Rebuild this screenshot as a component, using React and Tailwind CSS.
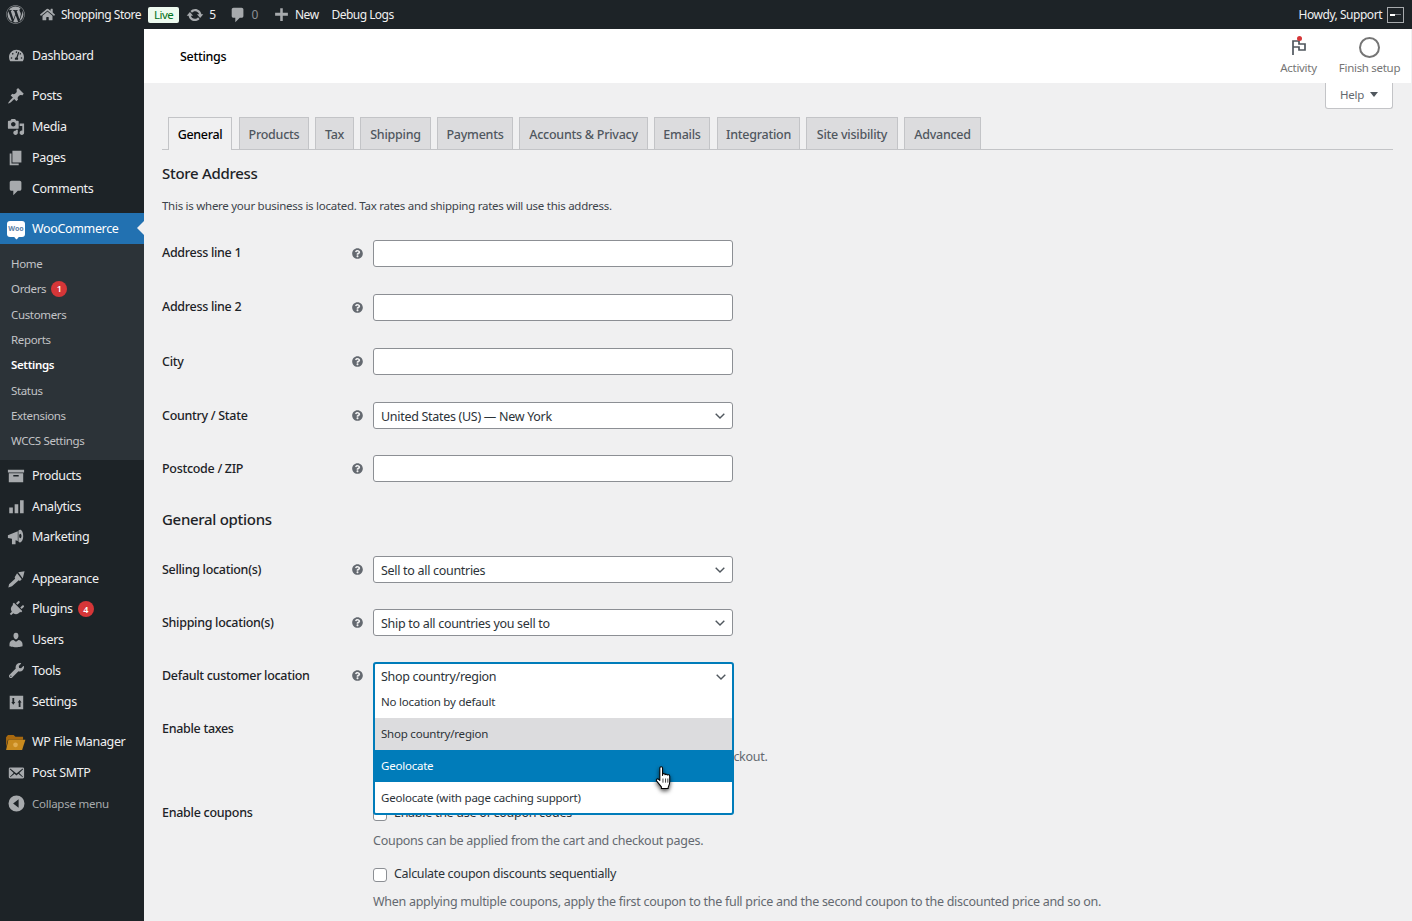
import React from 'react'
import { FaWordpress, FaHome, FaTachometerAlt, FaPlug, FaWrench, FaQuestionCircle } from 'react-icons/fa'

const FONT = "font-['Noto_Sans','Open_Sans',sans-serif]"

const Dash = ({ d, className, rule }) => (
  <svg viewBox="0 0 20 20" className={className} fill="currentColor">
    <path d={d} fillRule={rule} />
  </svg>
)

// dashicon style glyphs
const PATHS = {
  post: 'M10.44 3.02l1.82-1.82 6.36 6.35-1.83 1.82c-1.05-.68-2.48-.57-3.41.36l-.75.75c-.92.93-1.04 2.35-.35 3.41l-1.83 1.82-2.41-2.41-2.8 2.79c-.42.42-3.38 2.71-3.8 2.29s1.86-3.39 2.28-3.81l2.79-2.79L4.1 9.36l1.83-1.82c1.05.69 2.48.57 3.4-.36l.75-.75c.93-.92 1.05-2.35.36-3.41z',
  media: 'M13 11V4c0-.55-.45-1-1-1h-1.67L9 1H5L3.67 3H2c-.55 0-1 .45-1 1v7c0 .55.45 1 1 1h10c.55 0 1-.45 1-1zM7 4.5c1.38 0 2.5 1.12 2.5 2.5S8.38 9.5 7 9.5 4.5 8.38 4.5 7 5.62 4.5 7 4.5zM14 6h5v10.5c0 1.38-1.12 2.5-2.5 2.5S14 17.88 14 16.5s1.12-2.5 2.5-2.5c.17 0 .34.02.5.05V9h-3V6zm-4 8.05V13h2v3.5c0 1.38-1.12 2.5-2.5 2.5S7 17.88 7 16.5 8.12 14 9.5 14c.17 0 .34.02.5.05z',
  page: 'M6 15V2h10v13H6zm-1 1h8v2H3V5h2v11z',
  comment: 'M5 2h9c1.1 0 2 .9 2 2v7c0 1.1-.9 2-2 2h-2l-5 5v-5H5c-1.1 0-2-.9-2-2V4c0-1.1.9-2 2-2z',
  products: 'M1 3h18v3H1zM2 7h16v10H2zm5 2v1.500h6V9z',
  analytics: 'M2.500 10.500h4V17h-4zM8.500 7h4v10h-4zM14.500 2.500h4V17h-4z',
  marketing: 'M1 8l11-4.500v11L9.500 13.500V18H5.500v-6L1 11zM14.500 2c2 0 3.500 3 3.500 7s-1.500 7-3.500 7c-.7 0-1.300-.4-1.800-1V3c.5-.6 1.100-1 1.800-1zm.3 4.500c-.8 0-1.300 1.100-1.300 2.500s.5 2.500 1.300 2.500 1.300-1.100 1.300-2.500-.5-2.500-1.300-2.500z',
  brush: 'M12.500 2.500l7-1-2 8zM11.200 3.500l5.200 6.700-2 2-1.400-.7L5.500 18l-4 1.500.8-3.700 6.700-6-.5-1.700z',
  users: 'M10 9.25c-2.27 0-2.73-3.44-2.73-3.44C7 4.02 7.82 2 9.97 2c2.16 0 2.98 2.02 2.71 3.81 0 0-.46 3.44-2.68 3.44zm0 2.57L12.72 10c2.39 0 4.52 2.33 4.52 4.53v2.49s-3.65 1.13-7.24 1.13c-3.65 0-7.24-1.13-7.24-1.13v-2.49c0-2.25 1.94-4.48 4.47-4.48z',
  settings: 'M3 3h15v15H3zM6 5.500v4.500H4.800L7 13l2.200-3H8V5.500zm7 10h2v-5h1.200L14 7.500 11.800 10.500H13z',
  email: 'M19 14.5v-9c0-.83-.67-1.500-1.500-1.500H3.490c-.83 0-1.500.67-1.500 1.500v9c0 .83.67 1.500 1.500 1.500H17.500c.83 0 1.500-.67 1.500-1.500zm-1.310-9.110c.33.33.15.67-.03.84L13.600 9.950l3.900 4.060c.12.14.2.36.06.51-.13.16-.43.15-.56.05l-4.370-3.730-2.140 1.950-2.130-1.950-4.370 3.730c-.13.1-.43.11-.56-.05-.14-.15-.06-.37.06-.51l3.900-4.060-4.060-3.720c-.18-.17-.36-.51-.03-.84s.67-.17.95.07l6.240 5.040 6.250-5.040c.28-.24.62-.4.95-.07z',
  collapse: 'M10 .6a9.400 9.400 0 1 1 0 18.800A9.400 9.400 0 0 1 10 .6zm2.500 4.400L6 10l6.500 5z',
  sync: 'M10.200 3.280c3.530 0 6.430 2.610 6.920 6h2.080l-3.500 4-3.500-4h2.320c-.45-1.970-2.210-3.440-4.320-3.440-1.450 0-2.730.71-3.540 1.780L4.950 5.660C6.230 4.200 8.110 3.280 10.200 3.280zm-.4 13.440c-3.520 0-6.430-2.610-6.920-6H.8l3.500-4c1.170 1.330 2.330 2.670 3.500 4H5.480c.45 1.970 2.210 3.440 4.320 3.440 1.450 0 2.730-.71 3.540-1.780l1.710 1.950c-1.280 1.460-3.150 2.390-5.250 2.390z',
  plus: 'M17.500 8v3.500h-6V17.500H8.500v-6h-6V8h6V2.500h3V8z',
}

const Icon = (name) => ({ className }) => <Dash d={PATHS[name]} rule="evenodd" className={className} />

const FolderIcon = ({ className }) => (
  <svg viewBox="0 0 22 18" className={className}>
    <path d="M1 3.500L3 1h6l2 2h8v3H3L1 14z" fill="#a8690f" />
    <path d="M3.500 6H21.500L18 17H1z" fill="#c88a1e" />
    <circle cx="11" cy="11.500" r="2.500" fill="#e0ac50" />
  </svg>
)

const WooIcon = () => (
  <div className="relative flex h-[16px] w-[18px] items-center justify-center rounded-[3px] bg-white">
    <span className={`${FONT} text-[7px] font-bold leading-none text-[#5b7fa6]`}>Woo</span>
    <div className="absolute bottom-[-2px] left-[8px] h-[3px] w-[3px] rotate-45 bg-white" />
  </div>
)

const topMenu = [
  { label: 'Dashboard', Icon: FaTachometerAlt, size: 'h-[15px] w-[15px]' },
  { spacer: 'h-[10px]' },
  { label: 'Posts', Icon: Icon('post'), size: 'h-[18px] w-[18px]' },
  { label: 'Media', Icon: Icon('media'), size: 'h-[18px] w-[18px]' },
  { label: 'Pages', Icon: Icon('page'), size: 'h-[18px] w-[18px]' },
  { label: 'Comments', Icon: Icon('comment'), size: 'h-[18px] w-[18px]' },
]

const subMenu = [
  { label: 'Home' },
  { label: 'Orders', badge: '1' },
  { label: 'Customers' },
  { label: 'Reports' },
  { label: 'Settings', current: true },
  { label: 'Status' },
  { label: 'Extensions' },
  { label: 'WCCS Settings' },
]

const bottomMenu = [
  { label: 'Products', Icon: Icon('products'), size: 'h-[18px] w-[18px]' },
  { label: 'Analytics', Icon: Icon('analytics'), size: 'h-[18px] w-[18px]' },
  { label: 'Marketing', Icon: Icon('marketing'), size: 'h-[18px] w-[18px]' },
  { spacer: 'h-[10.5px]' },
  { label: 'Appearance', Icon: Icon('brush'), size: 'h-[18px] w-[18px]' },
  { label: 'Plugins', Icon: FaPlug, size: 'h-[16px] w-[16px] rotate-45', badge: '4' },
  { label: 'Users', Icon: Icon('users'), size: 'h-[18px] w-[18px]' },
  { label: 'Tools', Icon: FaWrench, size: 'h-[15px] w-[15px]' },
  { label: 'Settings', Icon: Icon('settings'), size: 'h-[18px] w-[18px]' },
  { spacer: 'h-[10px]' },
  { label: 'WP File Manager', Icon: FolderIcon, size: 'h-[17px] w-[21px] ml-[-1px]' },
  { label: 'Post SMTP', Icon: Icon('email'), size: 'h-[18px] w-[18px]' },
]

const tabs = [
  { label: 'Products', w: 'w-[70px] ml-px' },
  { label: 'Tax', w: 'w-[39px]' },
  { label: 'Shipping', w: 'w-[71px]' },
  { label: 'Payments', w: 'w-[76px]' },
  { label: 'Accounts & Privacy', w: 'w-[129px]' },
  { label: 'Emails', w: 'w-[56px]' },
  { label: 'Integration', w: 'w-[83px] ml-px' },
  { label: 'Site visibility', w: 'w-[92px]' },
  { label: 'Advanced', w: 'w-[77px]' },
]

function Badge({ children }) {
  return (
    <span className="ml-[5px] flex h-[16px] w-[16px] items-center justify-center rounded-full bg-[#d63638] text-[9px] font-semibold leading-none tracking-normal text-white">
      {children}
    </span>
  )
}

function MenuList({ items }) {
  return items.map((item, i) =>
    item.spacer ? (
      <div key={i} className={item.spacer} />
    ) : (
      <div key={i} className="flex h-[30.75px] items-center text-[12.5px] text-[#f0f0f1]">
        <div className="flex w-[32px] shrink-0 items-center justify-center text-[#a7aaad]">
          <item.Icon className={item.size} />
        </div>
        <span className="pt-px tracking-[-0.35px]">{item.label}</span>
        {item.badge && <Badge>{item.badge}</Badge>}
      </div>
    ),
  )
}

function Sidebar() {
  return (
    <aside className="w-[144px] shrink-0 bg-[#1d2327] pt-[11px]">
      <MenuList items={topMenu} />
      <div className="relative mt-[9.25px] flex h-[31px] items-center bg-[#2271b1] text-[12.5px] text-white">
        <div className="flex w-[32px] shrink-0 items-center justify-center">
          <WooIcon />
        </div>
        <span className="pt-px tracking-[-0.35px]">WooCommerce</span>
        <div className="absolute right-0 top-[8px] h-0 w-0 border-y-[7.500px] border-r-[7px] border-y-transparent border-r-[#f0f0f1]" />
      </div>
      <div className="bg-[#2c3338] py-[7px]">
        {subMenu.map((item) => (
          <div
            key={item.label}
            className={`flex h-[25.300px] items-center pl-[11px] text-[11.5px] tracking-[-0.35px] ${
              item.current ? 'font-semibold text-white' : 'text-[#c3c4c7]'
            }`}
          >
            {item.label}
            {item.badge && <Badge>{item.badge}</Badge>}
          </div>
        ))}
      </div>
      <MenuList items={bottomMenu} />
      <div className="flex h-[30.75px] items-center text-[11.5px] text-[#a7aaad]">
        <div className="flex w-[32px] shrink-0 items-center justify-center">
          <Dash d={PATHS.collapse} rule="evenodd" className="h-[17px] w-[17px]" />
        </div>
        <span className="tracking-[-0.25px]">Collapse menu</span>
      </div>
    </aside>
  )
}

function TopBar() {
  return (
    <header className="flex h-[29px] shrink-0 items-center bg-[#1d2327] text-[12px] tracking-[-0.47px] text-[#f0f0f1]">
      <FaWordpress className="ml-[6px] h-[19px] w-[19px] text-[#a7aaad]" />
      <FaHome className="ml-[15px] h-[15px] w-[15px] text-[#a7aaad]" />
      <span className="ml-[6px]">Shopping Store</span>
      <span className="ml-[7px] flex h-[16px] w-[31px] items-center justify-center rounded-[2px] bg-[#edfaef] text-[11.5px] text-[#007017]">
        Live
      </span>
      <Dash d={PATHS.sync} className="ml-[7px] h-[18px] w-[18px] text-[#a7aaad]" />
      <span className="ml-[5px]">5</span>
      <Dash d={PATHS.comment} className="ml-[13px] h-[18px] w-[18px] text-[#a7aaad]" />
      <span className="ml-[5px] text-[#8c8f94]">0</span>
      <Dash d={PATHS.plus} className="ml-[15px] h-[17px] w-[17px] text-[#a7aaad]" />
      <span className="ml-[5px]">New</span>
      <span className="ml-[13px] tracking-[-0.55px]">Debug Logs</span>
      <span className="ml-auto">Howdy, Support</span>
      <div className="ml-[5px] mr-[8px] flex h-[16px] w-[17px] items-center justify-center border border-[#a7aaad] bg-[#1d2327]">
        <div className="h-[2px] w-[5px] bg-white" />
        <div className="h-px w-[6px] bg-[#787c82]" />
      </div>
    </header>
  )
}

function PageHeader() {
  return (
    <div className="mr-px flex h-[54px] shrink-0 items-center bg-white pl-[36px] pr-[11px] text-[#757575]">
      <span className="translate-y-px text-[12.5px] font-medium tracking-[-0.3px] text-black">Settings</span>
      <div className="ml-auto flex w-[37px] flex-col items-center">
        <div className="relative flex h-[24px] items-center">
          <svg viewBox="0 0 16 18" className="h-[18px] w-[16px]" fill="none" stroke="#50575e" strokeWidth="1.700">
            <path d="M2 17V3h6v3h6v6H8V9H2" />
          </svg>
          <div className="absolute left-[6px] top-[1px] h-[5px] w-[5px] rounded-full bg-[#d63638]" />
        </div>
        <span className="whitespace-nowrap text-[11.5px] tracking-[-0.3px]">Activity</span>
      </div>
      <div className="ml-[22px] flex w-[61px] flex-col items-center">
        <div className="flex h-[24px] items-center">
          <div className="h-[21px] w-[21px] rounded-full border-2 border-[#757575]" />
        </div>
        <span className="whitespace-nowrap text-[11.5px] tracking-[-0.3px]">Finish setup</span>
      </div>
    </div>
  )
}

function Chevron({ className }) {
  return (
    <svg viewBox="0 0 10 6" className={className} fill="none" stroke="#50575e" strokeWidth="1.400">
      <path d="M.7.700 5 5l4.300-4.300" />
    </svg>
  )
}

function FieldRow({ label, mt, shift = 'translate-y-px', children }) {
  return (
    <div className={`grid h-[27px] grid-cols-[189px_22px_360px] items-center ${mt}`}>
      <span className={`text-[12.5px] font-medium tracking-[-0.3px] text-[#1d2327] ${shift}`}>{label}</span>
      <FaQuestionCircle className="ml-px h-[11px] w-[11px] text-[#646970]" />
      {children}
    </div>
  )
}

function TextInput() {
  return <div className="h-[27px] rounded-[3px] border border-[#8c8f94] bg-white" />
}

function Select({ value }) {
  return (
    <div className="flex h-[27px] items-center justify-between rounded-[3px] border border-[#8c8f94] bg-white pl-[7px] pr-[7px] text-[12.5px] tracking-[-0.3px] text-[#2c3338]">
      <span className="translate-y-[2px]">{value}</span>
      <Chevron className="h-[6px] w-[10px]" />
    </div>
  )
}

function LocationDropdown() {
  return (
    <div className="absolute left-0 top-0 z-10 h-[153px] w-[361px] overflow-hidden rounded-[3px] border-2 border-[#007cba] bg-white text-[#2c3338]">
      <div className="flex h-[26.500px] items-center justify-between pl-[6px] pr-[6px] pt-px text-[12.5px] tracking-[-0.3px]">
        Shop country/region
        <Chevron className="h-[6px] w-[10px] -translate-y-px" />
      </div>
      <div className="h-[27.500px] pl-[6px] text-[11.5px] leading-[22px] tracking-[-0.2px]">No location by default</div>
      <div className="flex h-[32px] items-center bg-[#dcdcde] pl-[6px] text-[11.5px] tracking-[-0.22px]">
        Shop country/region
      </div>
      <div className="flex h-[32px] items-center bg-[#007cba] pl-[6px] text-[11.5px] tracking-[-0.22px] text-white">
        Geolocate
      </div>
      <div className="flex h-[32px] items-center pl-[6px] text-[11.5px] tracking-[-0.22px]">
        Geolocate (with page caching support)
      </div>
    </div>
  )
}

function HandCursor() {
  return (
    <svg
      viewBox="0 0 17 24"
      className="absolute left-[282px] top-[104px] z-20 h-[25px] w-[18px] drop-shadow-[0_2px_2px_rgba(0,0,0,0.7)]"
      fill="#fff"
      stroke="#000"
      strokeWidth="1"
      strokeLinejoin="round"
    >
      <path d="M4.500 2a1.300 1.300 0 0 1 2.600 0v7l.4-1.500c1-.5 2 0 2 .8.5-.8 2-.6 2.200.4.700-.6 2.100-.3 2.300.9v5.400c0 2.500-1 4-1.500 5.500v1H6v-1.500L1.500 14.500c-1-1.300.3-2.800 1.700-1.800l1.300 1.200z" />
      <path d="M7.500 12v4M10 12v4M12.200 12v4" fill="none" strokeWidth=".7" />
    </svg>
  )
}

function Checkbox() {
  return <div className="h-[14px] w-[14px] shrink-0 rounded-[3px] border border-[#8c8f94] bg-white" />
}

function Content() {
  return (
    <main className="flex-1 overflow-hidden bg-[#f0f0f1] pl-[18px] pr-[19px]">
      <div className="flex justify-end">
        <div className="flex h-[26px] w-[68px] items-center justify-center gap-[6px] rounded-b-[3px] border border-t-0 border-[#c3c4c7] bg-white pb-[2px] text-[11.5px] tracking-[-0.2px] text-[#646970]">
          Help
          <svg viewBox="0 0 8 5" className="h-[5px] w-[8px]" fill="#50575e">
            <path d="M0 0h8L4 5z" />
          </svg>
        </div>
      </div>
      <nav className="mt-[8px] flex h-[33px] gap-[6px] border-b border-[#c3c4c7] pl-[6px]">
        <div className="flex h-[33px] w-[64px] items-center justify-center border border-b-0 border-[#c3c4c7] bg-[#f0f0f1] pt-[2px] text-[12.5px] font-medium tracking-[-0.3px] text-black">
          General
        </div>
        {tabs.map((tab) => (
          <div
            key={tab.label}
            className={`flex h-[32px] items-center justify-center border border-b-0 border-[#c3c4c7] bg-[#dcdcde] pt-[3px] text-[12.5px] font-medium tracking-[-0.25px] text-[#50575e] ${tab.w}`}
          >
            {tab.label}
          </div>
        ))}
      </nav>
      <h2 className="mt-[13px] text-[15px] font-medium leading-[21px] tracking-[-0.3px] text-[#1d2327]">Store Address</h2>
      <p className="mt-[11px] text-[11.5px] leading-[21px] tracking-[-0.27px] text-[#3c434a]">
        This is where your business is located. Tax rates and shipping rates will use this address.
      </p>
      <FieldRow label="Address line 1" mt="mt-[24px]" shift=""><TextInput /></FieldRow>
      <FieldRow label="Address line 2" mt="mt-[27px]" shift=""><TextInput /></FieldRow>
      <FieldRow label="City" mt="mt-[27px]"><TextInput /></FieldRow>
      <FieldRow label="Country / State" mt="mt-[27px]"><Select value="United States (US) — New York" /></FieldRow>
      <FieldRow label="Postcode / ZIP" mt="mt-[26px]"><TextInput /></FieldRow>
      <h2 className="mt-[27px] text-[15px] font-medium leading-[21px] tracking-[-0.3px] text-[#1d2327]">General options</h2>
      <FieldRow label="Selling location(s)" mt="mt-[26px]"><Select value="Sell to all countries" /></FieldRow>
      <FieldRow label="Shipping location(s)" mt="mt-[26px]"><Select value="Ship to all countries you sell to" /></FieldRow>
      <div className="relative mt-[26px]">
        <FieldRow label="Default customer location" mt="mt-0"><div /></FieldRow>
        <div className="absolute left-[211px] top-0 h-0 w-0">
          <LocationDropdown />
          <HandCursor />
        </div>
      </div>
      <div className="mt-[31px] grid grid-cols-[211px_1fr] text-[12.5px] tracking-[-0.3px]">
        <span className="font-medium text-[#1d2327]">Enable taxes</span>
        <div className="pt-[28px] text-[#646970]">
          Rates will be configurable and taxes will be calculated during checkout.
        </div>
      </div>
      <div className="mt-[37px] grid grid-cols-[211px_1fr] text-[12.5px] tracking-[-0.28px]">
        <span className="font-medium text-[#1d2327]">Enable coupons</span>
        <div>
          <div className="flex h-[20px] items-center gap-[7px] text-[#2c3338]">
            <Checkbox />
            Enable the use of coupon codes
          </div>
          <p className="mt-[8px] leading-[18px] tracking-[-0.27px] text-[#646970]">Coupons can be applied from the cart and checkout pages.</p>
          <div className="mt-[16px] flex h-[18px] items-center gap-[7px] tracking-[-0.33px] text-[#2c3338]">
            <Checkbox />
            Calculate coupon discounts sequentially
          </div>
          <p className="mt-[9px] whitespace-nowrap leading-[18px] text-[#646970]">
            When applying multiple coupons, apply the first coupon to the full price and the second coupon to the discounted price and so on.
          </p>
        </div>
      </div>
    </main>
  )
}

export default function App() {
  return (
    <div className={`flex h-[921px] flex-col overflow-hidden bg-[#f0f0f1] ${FONT}`}>
      <TopBar />
      <div className="flex min-h-0 flex-1">
        <Sidebar />
        <div className="flex min-w-0 flex-1 flex-col">
          <PageHeader />
          <Content />
        </div>
      </div>
    </div>
  )
}
